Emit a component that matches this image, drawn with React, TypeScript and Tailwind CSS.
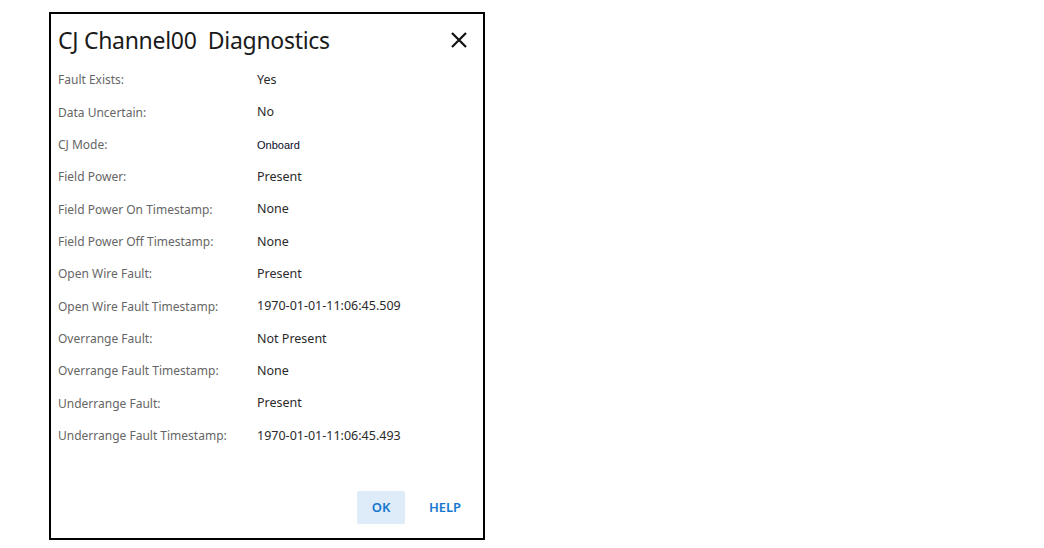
import React from "react";

const rows: [string, string, boolean?][] = [
  ["Fault Exists:", "Yes"],
  ["Data Uncertain:", "No"],
  ["CJ Mode:", "Onboard", true],
  ["Field Power:", "Present"],
  ["Field Power On Timestamp:", "None"],
  ["Field Power Off Timestamp:", "None"],
  ["Open Wire Fault:", "Present"],
  ["Open Wire Fault Timestamp:", "1970-01-01-11:06:45.509"],
  ["Overrange Fault:", "Not Present"],
  ["Overrange Fault Timestamp:", "None"],
  ["Underrange Fault:", "Present"],
  ["Underrange Fault Timestamp:", "1970-01-01-11:06:45.493"],
];

export default function App() {
  return (
    <div className="w-[1044px] h-[548px] bg-white pt-[12px] pl-[49px]" style={{ fontFamily: '"Noto Sans", "Open Sans", sans-serif' }}>
      <div className="w-[436px] h-[528px] border-2 border-black flex flex-col pl-[7px] pr-[9px] pt-[8px] pb-[14px]">
        <div className="flex items-center justify-between h-[36px]">
          <div className="text-[23px] tracking-[-0.3px] text-[#1a1a1a] leading-[36px] whitespace-pre">CJ Channel00  Diagnostics</div>
          <svg width="18" height="18" viewBox="0 0 18 18" className="mr-[6px]">
            <path d="M2 2 L16 16 M16 2 L2 16" stroke="#111" strokeWidth="2.2" strokeLinecap="butt" />
          </svg>
        </div>
        <div className="mt-[6px] flex flex-col">
          {rows.map(([l, v, alt]) => (
            <div key={l} className="h-[32.36px] flex items-center">
              <div className="w-[199px] text-[12px] text-[#666666]">{l}</div>
              {alt ? (
                <div className="text-[11px] text-[#0a0a2a]" style={{ fontFamily: '"Liberation Sans", Arial, sans-serif' }}>{v}</div>
              ) : (
                <div className="text-[12.5px] text-[#2a2a2a]">{v}</div>
              )}
            </div>
          ))}
        </div>
        <div className="mt-auto flex justify-end items-center gap-[11px]">
          <button className="w-[48px] h-[33px] bg-[#deebf8] text-[#1577d0] text-[13px] font-semibold rounded-[2px]">OK</button>
          <button className="w-[58px] h-[33px] text-[#1577d0] text-[13px] font-semibold">HELP</button>
        </div>
      </div>
    </div>
  );
}
